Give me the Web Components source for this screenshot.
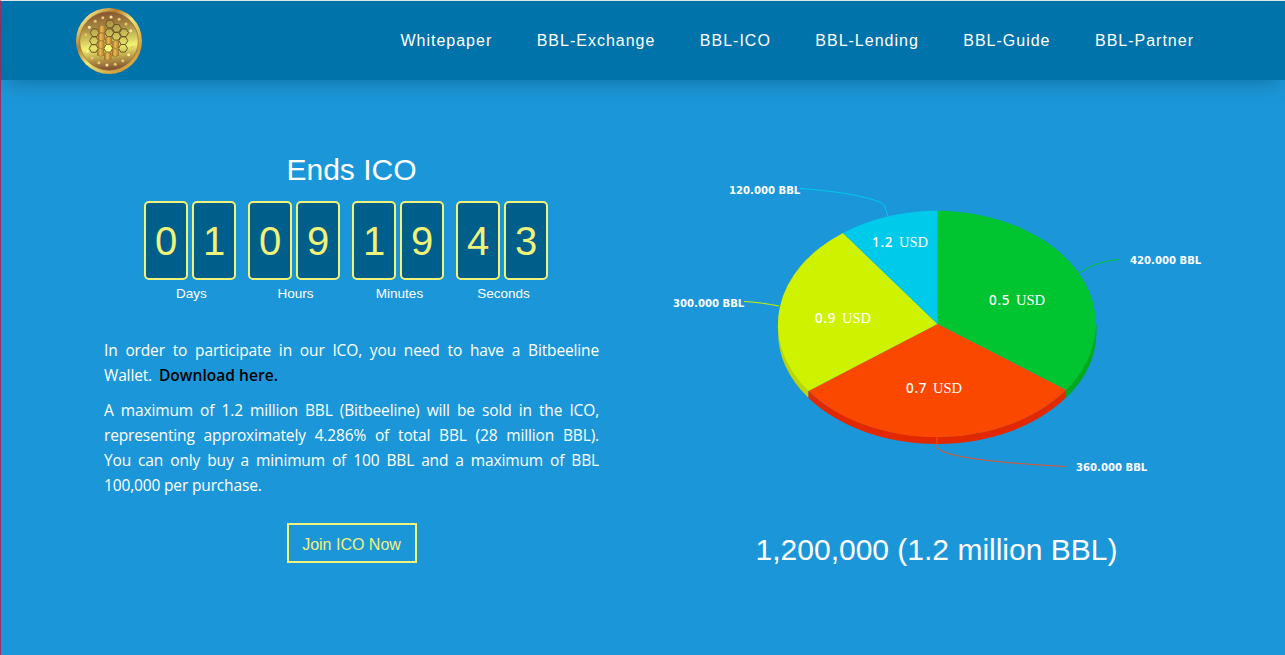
<!DOCTYPE html>
<html lang="en"><head><meta charset="utf-8"><title>Bitbeeline ICO</title>
<style>
body{margin:0;background:#1b97d9;font-family:"Liberation Sans",Arial,sans-serif;color:#fff;overflow:hidden}
</style></head><body>
<bbl-page>
<bbl-header slot="header"><bbl-link>Whitepaper</bbl-link><bbl-link>BBL-Exchange</bbl-link><bbl-link>BBL-ICO</bbl-link><bbl-link>BBL-Lending</bbl-link><bbl-link>BBL-Guide</bbl-link><bbl-link>BBL-Partner</bbl-link></bbl-header>
<bbl-sale slot="left"></bbl-sale>
<bbl-chart slot="right"></bbl-chart>
</bbl-page>
<script>
const define=(name,html)=>customElements.define(name,class extends HTMLElement{
  constructor(){super();this.attachShadow({mode:'open'}).innerHTML=typeof html==='function'?html(this):html;}
});
define('bbl-page',`<style>
:host{display:block;box-sizing:border-box;height:655px;border-left:1px solid #91356b;border-top:1px solid #e6e9eb}
main{display:grid;grid-template-columns:495px 1fr;column-gap:56px;padding-left:103px}
</style><slot name="header"></slot><main><slot name="left"></slot><slot name="right"></slot></main>`);
define('bbl-link',`<style>:host{display:block}a{color:#fff;font-size:16px;letter-spacing:1px;line-height:20px;text-decoration:none;white-space:nowrap}</style><a href="#"><slot></slot></a>`);
define('bbl-header',`<style>
:host{display:flex;box-sizing:border-box;height:79px;background:#0073aa;box-shadow:0 8px 20px -6px rgba(0,0,0,.27);align-items:center;padding:0 91px 0 75px;justify-content:space-between}
nav{display:flex;gap:44.45px}
</style><bbl-coin></bbl-coin><nav><slot></slot></nav>`);
define('bbl-coin',()=>{
 let dots='';
 for(let i=0;i<18;i++){const a=(i*20+5)*Math.PI/180;dots+=`<circle cx="${33+24*Math.sin(a)}" cy="${33-24*Math.cos(a)}" r="1.5" fill="${i%3?'#e9c968':'#ffe9a0'}"/>`}
 const hex=(x,y)=>`<path d="M${x-4.5} ${y}l2.3-3.8h4.4l2.3 3.8-2.3 3.8h-4.4z"/>`;
 let h='';
 [[18.7,24.7],[18,32.7],[17.7,40.5],[34,16],[33.3,24.7],[40.7,20.3],[40.3,28.3],[48,24.7],[47.3,32.7],[47,40.3]].forEach(p=>h+=hex(...p));
 let bars='';
 [[26,21],[25.4,28.7],[25,36.3],[24.7,44],[32.7,32.4],[31.8,48],[39.7,36.2],[39.3,44.2]].forEach(([x,y])=>bars+=`<path d="M${x-3.3} ${y-2.7}q3.3-2 6.6 0v6q-3.3 1.8-6.6 0z"/>`);
 return `<style>:host{display:block;width:66px;height:66px;margin-top:1px}svg{display:block}</style><svg width="66" height="66" viewBox="0 0 66 66">
 <defs><linearGradient id="rim" x1="0" y1="0" x2="1" y2="1"><stop stop-color="#dfc85f"/><stop offset=".15" stop-color="#eddc78"/><stop offset=".32" stop-color="#b87a30"/><stop offset=".5" stop-color="#f1e778"/><stop offset=".8" stop-color="#d09c3e"/><stop offset="1" stop-color="#f0d563"/></linearGradient>
 <linearGradient id="face" x1=".45" y1="0" x2=".55" y2="1"><stop stop-color="#855331"/><stop offset=".25" stop-color="#a58842"/><stop offset=".6" stop-color="#eff470"/><stop offset=".8" stop-color="#b69a47"/><stop offset="1" stop-color="#7c4a30"/></linearGradient>
 <linearGradient id="bar"><stop stop-color="#a56c28"/><stop offset=".4" stop-color="#e8bc50"/><stop offset="1" stop-color="#b57c30"/></linearGradient></defs>
 <circle cx="33" cy="33" r="33" fill="url(#rim)"/><circle cx="33" cy="33" r="29.3" fill="url(#face)" stroke="#9b6b32" stroke-width=".7"/>${dots}<g fill="#d5cc5b" fill-opacity=".35" stroke="#6d5523" stroke-width="1">${h}</g><g fill="#f3f779" stroke="#765d26">${hex(32.3,40.3)}</g><g fill="url(#bar)" stroke="#8a5f24" stroke-width=".5">${bars}</g></svg>`});
define('bbl-timer',el=>{const d=el.getAttribute('value');return `<style>
:host{display:block;width:92px}.d{display:flex;gap:4px}
.d span{box-sizing:border-box;width:44px;height:79px;border:2px solid #f1f27a;border-radius:5px;background:#005e8b;color:#f1f27a;font-size:40px;line-height:77px;text-align:center}
p{margin:6px 0 0;padding-left:3px;text-align:center;font-size:13.5px;line-height:16px}
</style><div class="d"><span>${d[0]}</span><span>${d[1]}</span></div><p><slot></slot></p>`});
define('bbl-sale',`<style>
:host{display:block;padding-top:72px}
h2{margin:0;font-weight:400;font-size:30px;line-height:36px;text-align:center}
.t{display:flex;gap:12px;margin:13px 0 0 40px}
.x{margin-top:36px;font-family:"Open Sans","Noto Sans",sans-serif;font-size:15.5px;letter-spacing:-.15px;line-height:25px}
.x p{margin:0 0 10px}.x p span{display:block;text-align:justify;text-align-last:justify;white-space:nowrap}.x p span:last-child{text-align-last:left}
b{color:#000;font-weight:600;letter-spacing:.05px;margin-left:3px}
button{display:block;box-sizing:border-box;width:130px;height:40px;padding:3px 1px 0 0;margin:25px 0 0 183px;border:2px solid #f1f27a;background:none;color:#f1f27a;font:16px "Liberation Sans",Arial,sans-serif}
</style><h2>Ends ICO</h2><div class="t"><bbl-timer value="01">Days</bbl-timer><bbl-timer value="09">Hours</bbl-timer><bbl-timer value="19">Minutes</bbl-timer><bbl-timer value="43">Seconds</bbl-timer></div>
<div class="x"><p><span>In order to participate in our ICO, you need to have a Bitbeeline</span><span>Wallet. <b>Download here.</b></span></p><p><span>A maximum of 1.2 million BBL (Bitbeeline) will be sold in the ICO,</span><span>representing approximately 4.286% of total BBL (28 million BBL).</span><span>You can only buy a minimum of 100 BBL and a maximum of BBL</span><span>100,000 per purchase.</span></p></div><button>Join ICO Now</button>`);
const value=(x,y,n)=>`<text x="${x}" y="${y}" class="n" textLength="20.5">${n}</text><text x="${x+27}" y="${y}" class="u" textLength="29" lengthAdjust="spacingAndGlyphs">USD</text>`;
const amount=(x,y,n)=>`<text x="${x}" y="${y}" class="a" textLength="71.3" lengthAdjust="spacingAndGlyphs">${n} BBL</text>`;
define('bbl-chart',`<style>
:host{display:block;padding-top:90px}svg{display:block}
text{fill:#fff}.n{font:500 13.5px "Noto Sans",sans-serif}.u{font:15.5px "Liberation Serif",serif}.a{font:bold 10.8px "DejaVu Sans",sans-serif}
h2{font-weight:400;font-size:30px;line-height:36px;margin:42px 0 0;width:563px;text-align:center}
</style><svg width="560" height="320" viewBox="655 170 560 320">
<path d="M778 324V331A159.5 113 0 0 0 808.5 398V391z" fill="#b8d60b"/>
<path d="M1096.5 324V331A159.5 113 0 0 1 1066 398V390z" fill="#00a91e"/>
<path d="M808.5 391V398A159.5 113 0 0 0 1066 397.5V390A159.5 113 0 0 1 808.5 391z" fill="#e22800"/>
<path d="M937.5 324V210.8A159.2 113.2 0 0 1 1066 390z" fill="#00c530"/>
<path d="M937.5 324L1066 390A159.2 113.2 0 0 1 808.5 391z" fill="#fb4800"/>
<path d="M937.5 324L808.5 391A159.2 113.2 0 0 1 843 233z" fill="#cff200"/>
<path d="M937.5 324L843 233A159.2 113.2 0 0 1 937.5 210.8z" fill="#00caea"/>
<g fill="none" stroke-width="1"><path d="M800 188.5C840 191 882 199 884.5 206L888 216" stroke="#00caea"/><path d="M744 301.5C757 302 768 304 779 306" stroke="#cff200"/><path d="M1080 272.5Q1097 261 1119 259.5" stroke="#00c530"/><path d="M937 437V446C937 455 980 462 1066 466.5" stroke="#e95125"/></g>
${value(872,247,'1.2')}${value(815,323,'0.9')}${value(989,305,'0.5')}${value(906,393,'0.7')}
${amount(729,194,'120.000')}${amount(673,307,'300.000')}${amount(1130,264,'420.000')}${amount(1076,471,'360.000')}
</svg><h2>1,200,000 (1.2 million BBL)</h2>`);
</script></body></html>
